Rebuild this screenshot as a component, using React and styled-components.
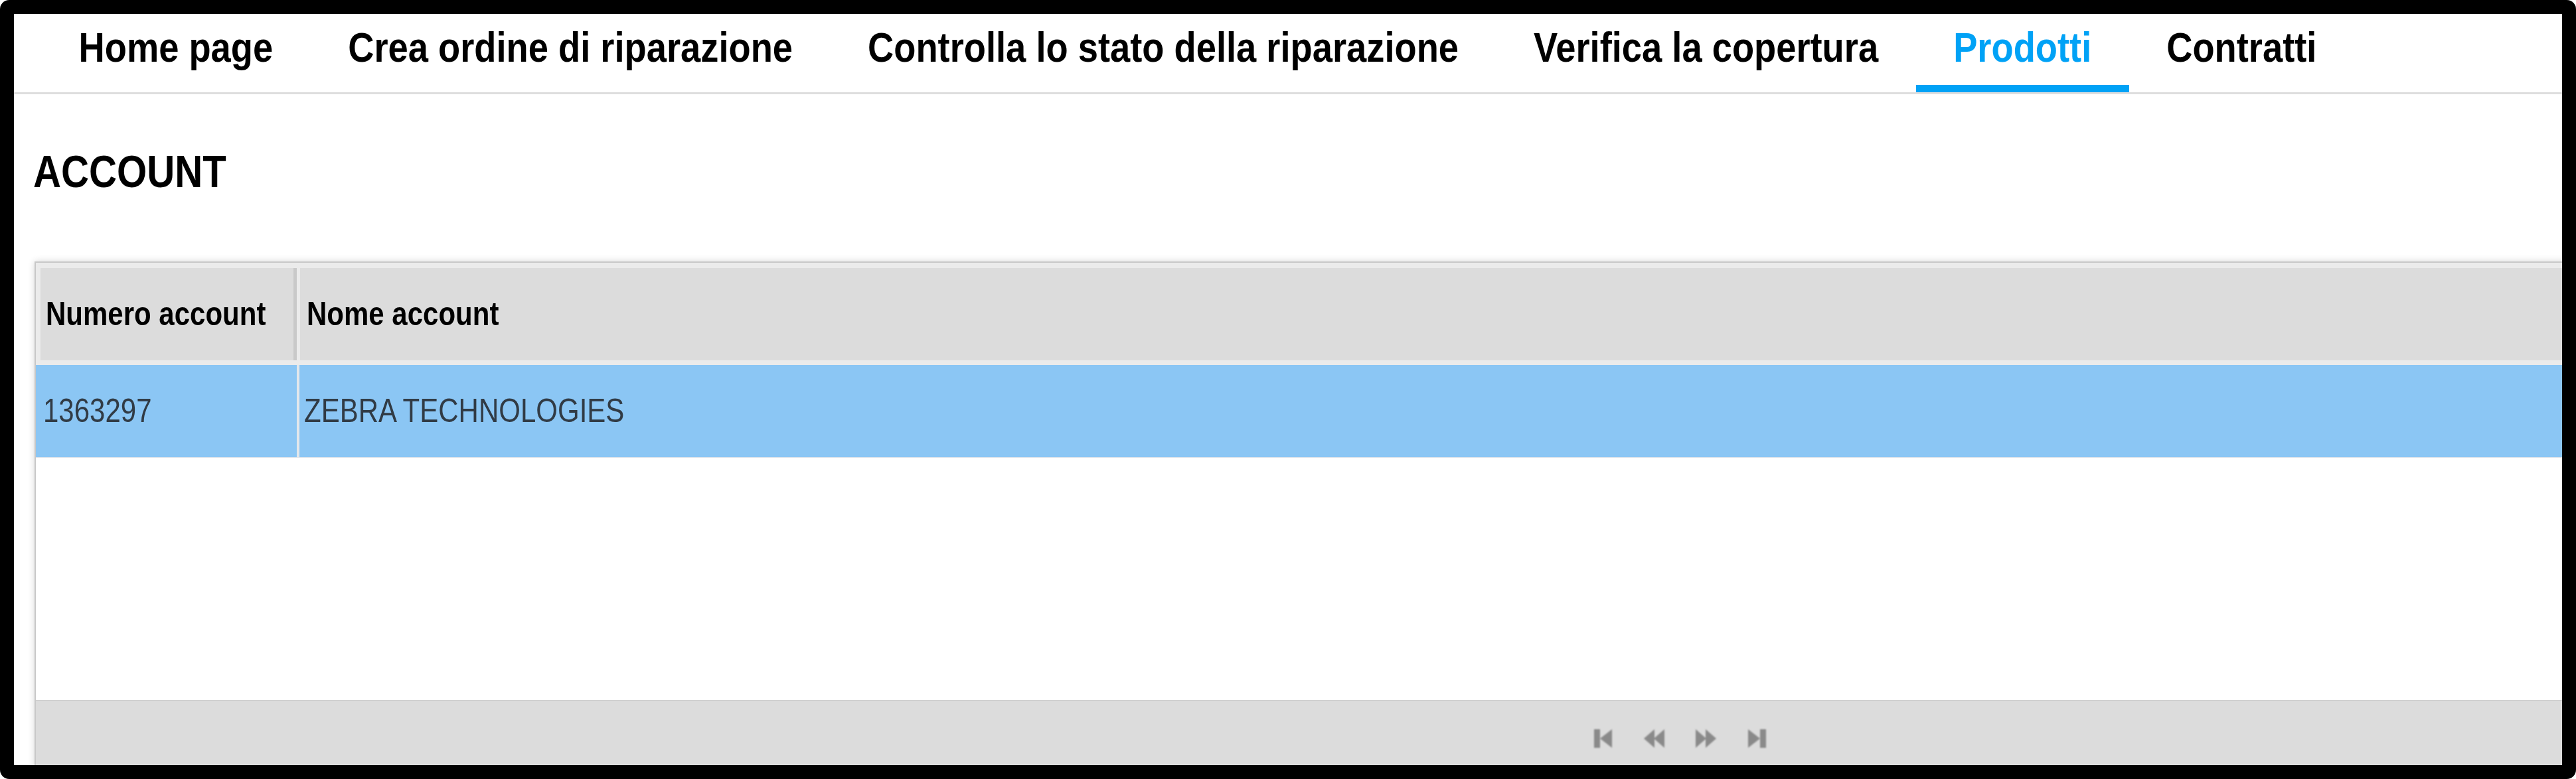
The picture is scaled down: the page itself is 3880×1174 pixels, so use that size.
import React from "react";
import styled, { createGlobalStyle } from "styled-components";

const GlobalStyle = createGlobalStyle`
  html, body {
    margin: 0;
    padding: 0;
    overflow: hidden;
    background: #ffffff;
  }
  body {
    font-family: "Liberation Sans", Arial, sans-serif;
  }
  * { box-sizing: border-box; }
`;

const Frame = styled.div`
  width: 3880px;
  height: 1174px;
  background: #000;
  border-radius: 14px;
  padding: 21px;
`;

const Content = styled.div`
  width: 100%;
  height: 100%;
  background: #fff;
  overflow: hidden;
  display: flex;
  flex-direction: column;
  align-items: flex-start;
`;

const Nav = styled.nav`
  display: flex;
  align-self: stretch;
  padding-left: 41px;
  border-bottom: 3px solid #dedede;
`;

const Tab = styled.div`
  display: flex;
  align-items: center;
  height: 118px;
  padding: 0 56.5px 4px;
  border-bottom: 11px solid ${(p) => (p.$active ? "#00a2f6" : "transparent")};
  color: ${(p) => (p.$active ? "#00a2f6" : "#000")};
  font-size: 54.3px;
  font-weight: 700;
  flex-shrink: 0;
`;

const Label = styled.span`
  display: inline-block;
  line-height: 1;
  white-space: nowrap;
  transform: scaleY(1.17);
  transform-origin: center;
`;

const Title = styled.h1`
  margin: 88px 0 0 29px;
  height: 58px;
  display: flex;
  align-items: center;
  font-size: 58.2px;
  font-weight: 700;
  color: #000;
`;

const Table = styled.div`
  margin: 106px 0 0 31px;
  width: 4956px;
  flex-shrink: 0;
  border: 2px solid #c8c8c8;
  box-shadow: 0 0 10px rgba(0, 0, 0, 0.16);
  background: #fff;
`;

const HeaderRow = styled.div`
  display: flex;
  background: #ebebeb;
  padding: 8px 0 7px 7px;
`;

const HeadCell = styled.div`
  display: flex;
  align-items: center;
  height: 139px;
  background: #dcdcdc;
  font-size: 42px;
  font-weight: 700;
  color: #000;
  padding-left: ${(p) => (p.$first ? "8px" : "10px")};
  ${(p) =>
    p.$first
      ? `width: 386px; border-right: 5px solid #c9c9c9; margin-right: 5px;`
      : `flex: 1;`}
`;

const Body = styled.div`
  min-height: 505px;
  background: #fff;
`;

const BodyRow = styled.div`
  display: grid;
  grid-template-columns: 397px 1fr;
  height: 140px;
  background: #8bc6f4;
  border-bottom: 1px solid #e2e6ea;
`;

const Cell = styled.div`
  display: flex;
  align-items: center;
  font-size: 42px;
  color: #313b45;
  padding-left: ${(p) => (p.$first ? "11px" : "7px")};
  ${(p) => (p.$first ? `border-right: 4px solid #e3e7eb;` : "")}
`;

const Footer = styled.div`
  display: flex;
  justify-content: center;
  align-items: center;
  gap: 45px;
  height: 114px;
  background: #dcdcdc;
  border-top: 1px solid #cdcdcd;
`;

const PagerButton = styled.button`
  width: 32px;
  height: 32px;
  padding: 0;
  border: none;
  background: none;
  display: flex;
  cursor: default;
  svg {
    width: 32px;
    height: 32px;
    fill: #8a8a8a;
    filter: blur(0.8px);
  }
`;

const tabs = [
  "Home page",
  "Crea ordine di riparazione",
  "Controlla lo stato della riparazione",
  "Verifica la copertura",
  "Prodotti",
  "Contratti",
];

const FirstIcon = () => (
  <svg viewBox="0 0 32 32">
    <rect x="2" y="2" width="9" height="28" />
    <polygon points="29,2 29,30 11,16" />
  </svg>
);
const PrevIcon = () => (
  <svg viewBox="0 0 32 32">
    <polygon points="16,2 16,30 0,16" />
    <polygon points="31,2 31,30 15,16" />
  </svg>
);
const NextIcon = () => (
  <svg viewBox="0 0 32 32">
    <polygon points="1,2 1,30 17,16" />
    <polygon points="16,2 16,30 32,16" />
  </svg>
);
const LastIcon = () => (
  <svg viewBox="0 0 32 32">
    <polygon points="3,2 3,30 21,16" />
    <rect x="21" y="2" width="9" height="28" />
  </svg>
);

export default function App() {
  return (
    <>
      <GlobalStyle />
      <Frame>
        <Content>
          <Nav>
            {tabs.map((t) => (
              <Tab key={t} $active={t === "Prodotti"}>
                <Label>{t}</Label>
              </Tab>
            ))}
          </Nav>
          <Title>
            <Label>ACCOUNT</Label>
          </Title>
          <Table>
            <HeaderRow>
              <HeadCell $first>
                <Label>Numero account</Label>
              </HeadCell>
              <HeadCell>
                <Label>Nome account</Label>
              </HeadCell>
            </HeaderRow>
            <Body>
              <BodyRow>
                <Cell $first>
                  <Label>1363297</Label>
                </Cell>
                <Cell>
                  <Label>ZEBRA TECHNOLOGIES</Label>
                </Cell>
              </BodyRow>
            </Body>
            <Footer>
              <PagerButton aria-label="Prima pagina"><FirstIcon /></PagerButton>
              <PagerButton aria-label="Pagina precedente"><PrevIcon /></PagerButton>
              <PagerButton aria-label="Pagina successiva"><NextIcon /></PagerButton>
              <PagerButton aria-label="Ultima pagina"><LastIcon /></PagerButton>
            </Footer>
          </Table>
        </Content>
      </Frame>
    </>
  );
}
